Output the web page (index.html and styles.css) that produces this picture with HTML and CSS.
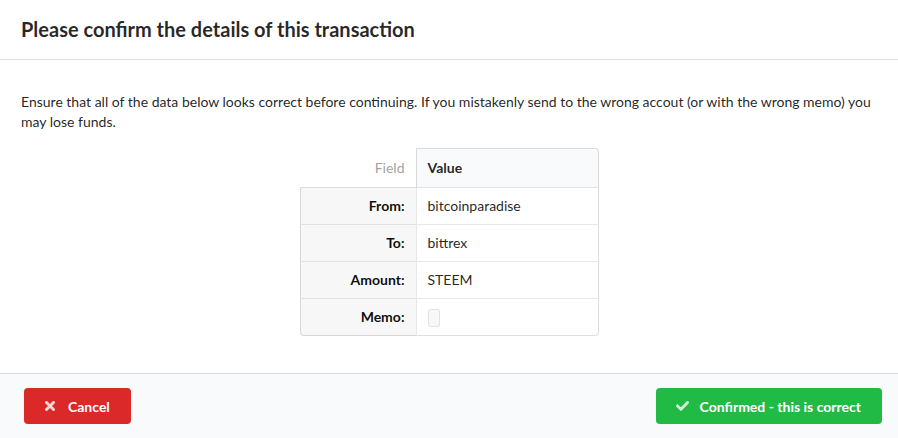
FILE: index.html
```html
<!DOCTYPE html>
<html>
<head>
<meta charset="utf-8">
<link rel="stylesheet" href="styles.css">
</head>
<body>
<div class="modal">
  <div class="modal-header">Please confirm the details of this transaction</div>
  <div class="modal-content">
    <p class="intro">Ensure that all of the data below looks correct before continuing. If you mistakenly send to the wrong accout (or with the wrong memo) you may lose funds.</p>
    <table class="def-table">
      <thead>
        <tr><th class="field-head">Field</th><th class="value-head">Value</th></tr>
      </thead>
      <tbody>
        <tr><td class="label">From:</td><td class="value">bitcoinparadise</td></tr>
        <tr><td class="label">To:</td><td class="value">bittrex</td></tr>
        <tr><td class="label">Amount:</td><td class="value">STEEM</td></tr>
        <tr><td class="label">Memo:</td><td class="value"><code class="memo"></code></td></tr>
      </tbody>
    </table>
  </div>
  <div class="modal-actions">
    <button class="btn btn-red">
      <svg class="btn-icon" width="10" height="10" viewBox="0 0 10 10"><path d="M1.5 1.5 L8.5 8.5 M8.5 1.5 L1.5 8.5" stroke="#fbd8d8" stroke-width="2.8" stroke-linecap="square"/></svg>
      <span>Cancel</span>
    </button>
    <button class="btn btn-green">
      <svg class="btn-icon" width="13" height="10" viewBox="0 0 13 10"><path d="M1.5 5 L5 8.3 L11.5 1.5" fill="none" stroke="#d3f1da" stroke-width="2.8" stroke-linecap="square"/></svg>
      <span>Confirmed - this is correct</span>
    </button>
  </div>
</div>
</body>
</html>
```
FILE: styles.css
```css
html, body {
  margin: 0;
  padding: 0;
  background: #fff;
}
body {
  font-family: Lato, "Open Sans", sans-serif;
  font-size: 14px;
  color: rgba(0, 0, 0, 0.87);
}
.modal {
  width: 898px;
  height: 438px;
  display: flex;
  flex-direction: column;
  background: #fff;
}
.modal-header {
  padding: 17px 21px;
  line-height: 25px;
  font-size: 20px;
  font-weight: 700;
  color: rgba(0, 0, 0, 0.85);
  border-bottom: 1px solid rgba(34, 36, 38, 0.15);
}
.modal-content {
  padding: 32px 21px 35px;
  flex: 1;
}
.intro {
  margin: 0 0 16px;
  line-height: 20px;
}
.def-table {
  margin: 0 auto;
  border-collapse: separate;
  border-spacing: 0;
  line-height: 20px;
}
.def-table th, .def-table td {
  padding: 0 11px;
}
.field-head {
  width: 94px;
  height: 39px;
  text-align: right;
  font-weight: 400;
  color: rgba(0, 0, 0, 0.4);
  border-bottom: 1px solid rgba(34, 36, 38, 0.15);
}
.value-head {
  width: 159px;
  text-align: left;
  font-weight: 700;
  color: rgba(0, 0, 0, 0.87);
  background: #f9fafb;
  border-top: 1px solid rgba(34, 36, 38, 0.15);
  border-left: 1px solid rgba(34, 36, 38, 0.15);
  border-right: 1px solid rgba(34, 36, 38, 0.15);
  border-bottom: 1px solid rgba(34, 36, 38, 0.1);
  border-top-left-radius: 0;
  border-top-right-radius: 4px;
}
.def-table td {
  height: 36px;
  border-top: 1px solid rgba(34, 36, 38, 0.1);
}
.def-table tbody tr:first-child td {
  border-top: none;
}
.label {
  text-align: right;
  font-weight: 700;
  color: rgba(0, 0, 0, 0.95);
  background: #f7f7f7;
  border-left: 1px solid rgba(34, 36, 38, 0.15);
}
.value {
  border-left: 1px solid rgba(34, 36, 38, 0.1);
  border-right: 1px solid rgba(34, 36, 38, 0.15);
}
.def-table tbody tr:last-child td {
  height: 36px;
  border-bottom: 1px solid rgba(34, 36, 38, 0.15);
}
.def-table tbody tr:last-child .label {
  border-bottom-left-radius: 4px;
}
.def-table tbody tr:last-child .value {
  border-bottom-right-radius: 4px;
}
.memo {
  display: inline-block;
  width: 10px;
  height: 16px;
  vertical-align: middle;
  background: #f8f8f9;
  border: 1px solid rgba(34, 36, 38, 0.1);
  border-radius: 3px;
}
.modal-actions {
  display: flex;
  justify-content: space-between;
  align-items: center;
  padding: 14px 16px 14px 24px;
  background: #f9fafb;
  border-top: 1px solid rgba(34, 36, 38, 0.15);
}
.btn {
  display: flex;
  align-items: center;
  height: 36px;
  border: none;
  border-radius: 4px;
  font-family: Lato, "Open Sans", sans-serif;
  font-size: 14px;
  font-weight: 700;
  color: #fff;
  padding: 0 21px;
  cursor: pointer;
}
.btn-red {
  background: #db2828;
}
.btn-green {
  background: #21ba45;
  padding-left: 20px;
}
.btn-red .btn-icon {
  margin-right: 13px;
}
.btn-green .btn-icon {
  margin-right: 11px;
}
```
